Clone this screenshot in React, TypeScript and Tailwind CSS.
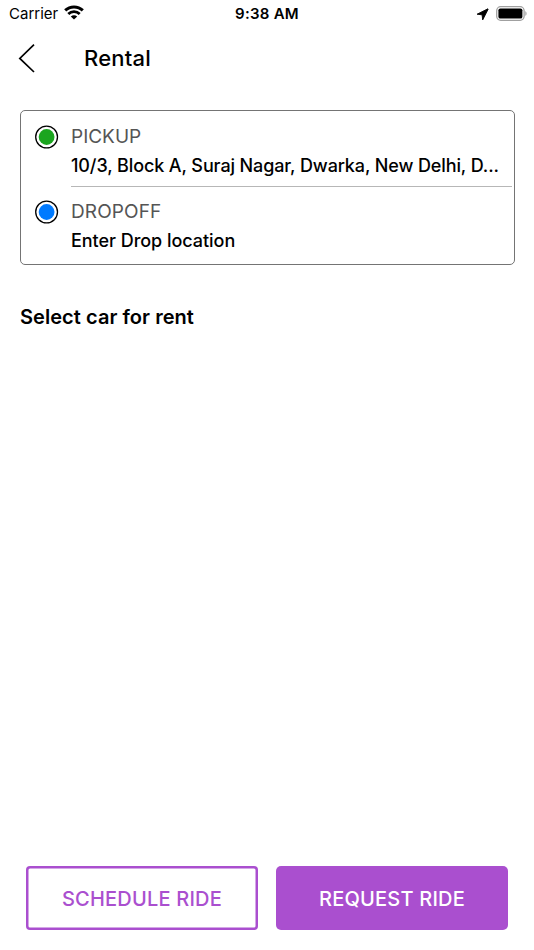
import React from "react";

function StatusBar() {
  return (
    <header className="grid h-7 grid-cols-3 items-center pl-[9px] pr-[7px] text-[15px] leading-7">
      <div className="flex items-center gap-[6px]">
        <span>Carrier</span>
        <svg width="20" height="15" viewBox="0 0 20 15" className="-mt-[3px]" fill="none" stroke="black">
          <path d="M1.2 5.4C6.1.7 13.9.7 18.8 5.4" strokeWidth="3" />
          <path d="M4.3 8.9c3.2-3.1 8.2-3.1 11.4 0" strokeWidth="2.8" />
          <path d="M10 14.6l-3.2-3.2c1.8-1.6 4.6-1.6 6.4 0z" fill="black" stroke="none" />
        </svg>
      </div>
      <span className="-ml-[2px] text-center font-semibold tracking-[0.25px]">9:38 AM</span>
      <div className="flex items-center justify-end gap-[7px]">
        <svg width="13" height="13" viewBox="0 0 13 13">
          <path d="M11.9.8L1.1 6.2l5 .6.6 5.1L12.2 1.1z" stroke="black" strokeWidth=".9" strokeLinejoin="round" />
        </svg>
        <svg width="31" height="15" viewBox="0 0 31 15" className="-mt-px">
          <rect x=".7" y=".7" width="27.4" height="13.6" rx="4" fill="none" stroke="#a0a0a0" strokeWidth="1.3" />
          <rect x="2.4" y="2.4" width="24" height="10.2" rx="1.9" />
          <path d="M29.3 5.2c1.7.7 1.7 3.9 0 4.6z" fill="#a0a0a0" />
        </svg>
      </div>
    </header>
  );
}

function Marker({ color }: { color: string }) {
  return (
    <svg width="24" height="24" viewBox="0 0 24 24" className="shrink-0">
      <circle cx="11.6" cy="12" r="10.9" fill="white" stroke="black" strokeWidth="1.3" />
      <circle cx="11.6" cy="12" r="7.9" fill={color} />
    </svg>
  );
}

export default function App() {
  return (
    <main className="flex h-[950px] w-[534px] flex-col bg-white font-['Inter','Liberation_Sans',sans-serif] text-black">
      <StatusBar />
      <nav className="flex h-[60px] items-center pl-[18px]">
        <svg width="18" height="30" viewBox="0 0 18 30" fill="none" stroke="black" strokeWidth="1.7">
          <path d="M16 1.6L1.8 15.4 16 29" />
        </svg>
        <h1 className="ml-12 text-[22px] leading-7 font-medium tracking-[0.2px]">Rental</h1>
      </nav>

      <section className="mr-[19.5px] ml-[19.5px] mt-[22px] flex h-[155px] flex-col rounded-[5px] border border-[#747474] pl-[14px] pr-[2px]">
        <div className="flex h-[76px] gap-[12.5px]">
          <div className="pt-[14px]"><Marker color="#1ba51f" /></div>
          <div className="flex-1 border-b border-[#b7b7b7] pt-[14px]">
            <p className="text-[19px] leading-6 text-[#555]">PICKUP</p>
            <p className="mt-[5px] text-[18px] leading-6 font-medium tracking-[-0.11px] whitespace-nowrap">10/3, Block A, Suraj Nagar, Dwarka, New Delhi, D...</p>
          </div>
        </div>
        <div className="flex gap-[12.5px]">
          <div className="pt-[13px]"><Marker color="#007aff" /></div>
          <div className="pt-[13px]">
            <p className="text-[19px] leading-6 tracking-[0.1px] text-[#555]">DROPOFF</p>
            <p className="mt-[5px] text-[18px] leading-6 font-medium tracking-[-0.04px]">Enter Drop location</p>
          </div>
        </div>
      </section>

      <h2 className="mt-9 ml-5 text-[20px] leading-8 font-semibold tracking-[0.05px]">Select car for rent</h2>

      <footer className="mt-auto mb-5 flex h-16 justify-between px-[26px] text-[20px] font-[550]">
        <button className="w-[232px] rounded-[4px] pt-px tracking-[0.2px] text-[#aa4fcf] shadow-[inset_0_0_0_2.5px_#aa4fcf]">SCHEDULE RIDE</button>
        <button className="w-[232px] rounded-[5px] bg-[#aa4fcf] pt-px tracking-[0.2px] text-white">REQUEST RIDE</button>
      </footer>
    </main>
  );
}
